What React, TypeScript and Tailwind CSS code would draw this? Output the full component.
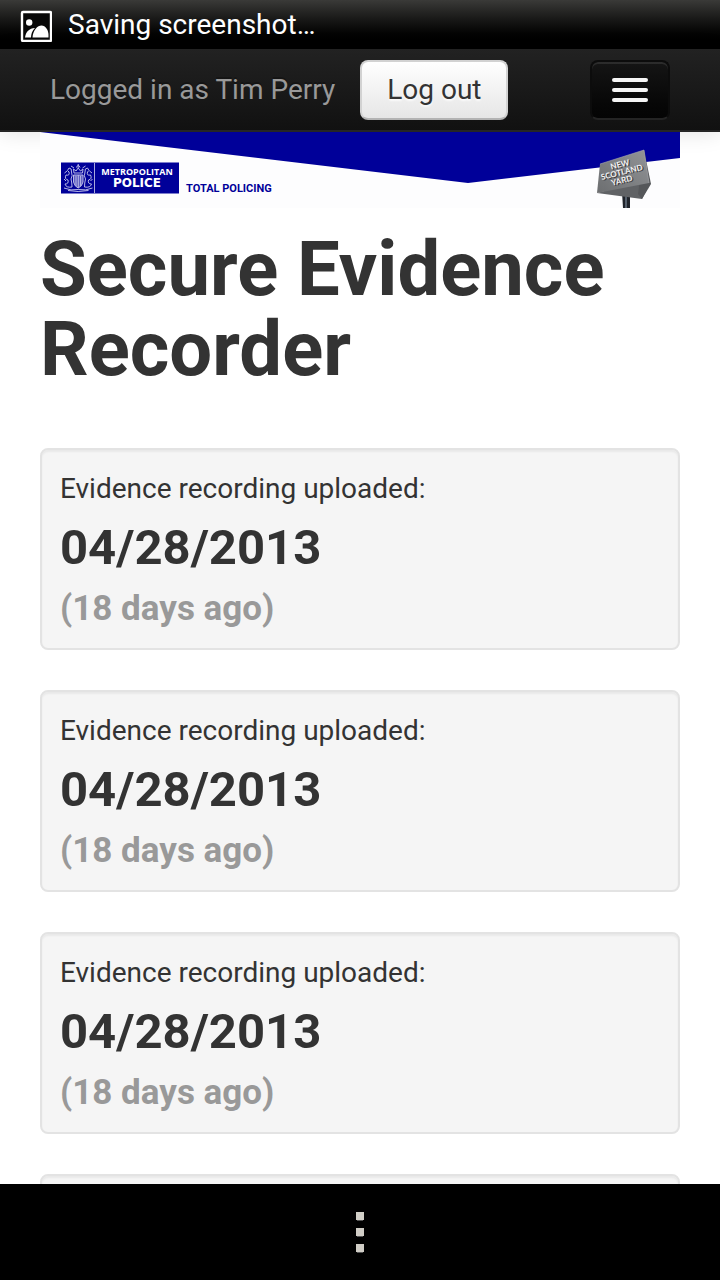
import React from "react";

type Recording = { id: number; date: string; age: string };

const recordings: Recording[] = [
  { id: 1, date: "04/28/2013", age: "(18 days ago)" },
  { id: 2, date: "04/28/2013", age: "(18 days ago)" },
  { id: 3, date: "04/28/2013", age: "(18 days ago)" },
  { id: 4, date: "04/28/2013", age: "(18 days ago)" },
];

function StatusBar() {
  return (
    <div className="flex h-[49px] shrink-0 items-center gap-4 bg-linear-to-b from-[#3a3a38] to-black px-5 text-white">
      <svg className="mt-[2px] size-8 shrink-0" viewBox="0 0 32 32" aria-hidden="true">
        <rect x="2" y="2" width="29" height="29" rx="1" fill="#080808" stroke="#fff" strokeWidth="2.4" />
        <circle cx="9.2" cy="12.5" r="3.2" fill="#fff" />
        <path d="M5 27.500C6 21.500 9 18.500 15 18C12 21 11.200 24 11 27.500Z" fill="#fff" />
        <path d="M12.500 27.500C13 20 17.500 15.500 21.500 15.500C25.500 15.500 28.500 20 28.500 25V27.500Z" fill="#fff" />
      </svg>
      <span className="text-[28px] leading-10">Saving screenshot…</span>
    </div>
  );
}

function NavBar() {
  return (
    <nav className="flex shrink-0 items-center justify-between border-b-2 border-[#252525] bg-linear-to-b from-[#222] to-[#111] px-[50px] pt-[11px] pb-[10px] shadow-[0_2px_20px_rgba(0,0,0,0.1)]">
      <div className="flex items-center gap-[25px]">
        <span className="text-[28px] leading-10 text-[#999] [text-shadow:0_-2px_0_rgba(0,0,0,0.25)]">
          Logged in as Tim Perry
        </span>
        <button
          type="button"
          className="h-[60px] rounded-lg border-2 border-[#d2d2d2] border-b-[#b3b3b3] bg-linear-to-b from-white to-[#e6e6e6] px-[25px] text-[28px] leading-10 text-[#333] [text-shadow:0_2px_2px_rgba(255,255,255,0.75)]"
        >
          Log out
        </button>
      </div>
      <button
        type="button"
        aria-label="Toggle navigation"
        className="flex h-[60px] w-20 shrink-0 flex-col items-center justify-center gap-[6px] rounded-lg border-2 border-[#0c0c0c] border-b-[#242424] bg-linear-to-b from-[#151515] to-[#040404] shadow-[inset_0_2px_0_rgba(255,255,255,0.1)]"
      >
        <span className="h-1 w-9 rounded-xs bg-[#f5f5f5]" />
        <span className="h-1 w-9 rounded-xs bg-[#f5f5f5]" />
        <span className="h-1 w-9 rounded-xs bg-[#f5f5f5]" />
      </button>
    </nav>
  );
}

function Banner() {
  return (
    <svg
      className="relative block w-full bg-[#fdfdfe]"
      viewBox="0 0 640 76"
      role="img"
      aria-label="Metropolitan Police, Total Policing"
    >
      <defs>
        <linearGradient id="signFace" x1="0" y1="1" x2="1" y2="0">
          <stop offset="0" stopColor="#6c6e70" />
          <stop offset="1" stopColor="#929497" />
        </linearGradient>
      </defs>
      <path d="M0 0H640V26L428 51Z" fill="#000099" />

      <rect x="21" y="30.5" width="118" height="31" fill="#000099" />
      <path d="M54.500 31V61" stroke="#a8a8dc" strokeWidth="1" />
      <g fill="none" stroke="#b9b9e6" strokeWidth="1">
        <path d="M33.500 43H43V50Q42 54.500 38.200 56Q34.500 54.500 33.500 50Z" fill="#5c5cc0" />
        <path d="M36 44V54M38.300 43V56M40.600 44V54" />
        <path d="M34 41L33.500 37L36 39L38.200 36L40.500 39L43 37L42.500 41Z" />
        <path d="M36.500 35.500Q38.200 31 40 35.500M38.200 32V36" />
        <path d="M32 55Q26 56 25 52Q29 52 28 48Q24 47 26 43Q30 44 29 40Q26 39 29 36Q32 36 31.500 40Q33 44 31 47Q32 51 32 55" />
        <path d="M44.500 55Q50.500 56 51.500 52Q47.500 52 48.500 48Q52.500 47 50.500 43Q46.500 44 47.500 40Q50.500 39 47.500 36Q44.500 36 45 40Q43.500 44 45.500 47Q44.500 51 44.500 55" />
        <path d="M24 56Q31 59 38.200 57.500Q46 59 52.500 56M28 58.500Q38 60.500 48.500 58.500" />
        <path d="M24.500 41L27 39M52 41L49.500 39M24 47L26 49M52.500 47L50.500 49M31 34L34 36M45.500 34L42.500 36" />
      </g>
      <text x="97" y="43" textAnchor="middle" fill="#fff" className="font-['Open_Sans'] text-[9px] font-bold">
        METROPOLITAN
      </text>
      <text x="97" y="55" textAnchor="middle" fill="#fff" className="font-['DejaVu_Sans'] text-[12px] font-bold">
        POLICE
      </text>
      <text x="146" y="60" fill="#000099" className="font-['Roboto'] text-[11px] font-bold">
        TOTAL POLICING
      </text>

      <path d="M582 60H590V76H583Z" fill="#20242b" />
      <path d="M585 62H587V76H585Z" fill="#56606c" />
      <path d="M557 61L602 67L610 51L604 48Z" fill="#606265" />
      <path d="M604 18L611 52L602 67L598 62Z" fill="#55575a" />
      <path d="M560 32L604 18L609 51L557 61Z" fill="url(#signFace)" />
      <path d="M560 32L604 18L609 51" fill="none" stroke="#aaaaae" strokeWidth="0.6" />
      <g
        transform="translate(582 41) rotate(-14)"
        textAnchor="middle"
        fill="#f2f2f2"
        className="font-['Lato'] text-[8px] font-bold [text-shadow:1px_1px_0_#3a3a3c]"
      >
        <text x="0" y="-6">NEW</text>
        <text x="0" y="2">SCOTLAND</text>
        <text x="-2" y="10">YARD</text>
      </g>
    </svg>
  );
}

function RecordingCard({ recording }: { recording: Recording }) {
  return (
    <li className="rounded-lg border-2 border-[#e3e3e3] bg-[#f5f5f5] px-[18px] pt-[19px] pb-[9px] shadow-[inset_0_2px_2px_rgba(0,0,0,0.05)]">
      <p className="text-[28px] leading-10">Evidence recording uploaded:</p>
      <h2 className="flex flex-col font-bold">
        <span className="text-[49px] leading-[78px]">{recording.date}</span>
        <small className="-mt-2 text-[35px] leading-[60px] text-[#999]">{recording.age}</small>
      </h2>
    </li>
  );
}

export default function App() {
  return (
    <div className="flex h-screen flex-col overflow-hidden bg-white font-['Roboto',sans-serif] text-[#333]">
      <StatusBar />
      <NavBar />
      <main className="min-h-0 flex-1 overflow-y-auto px-10 [scrollbar-width:none]">
        <Banner />
        <h1 className="mt-[21px] text-[76px] leading-[80px] font-bold">Secure Evidence Recorder</h1>
        <ul className="mt-[59px] flex flex-col gap-10">
          {recordings.map((recording) => (
            <RecordingCard key={recording.id} recording={recording} />
          ))}
        </ul>
      </main>
      <footer className="flex h-24 shrink-0 items-center justify-center bg-black">
        <button type="button" aria-label="More options" className="flex flex-col gap-2 p-2">
          <span className="size-2 bg-[#d0cdc6] shadow-[0_2px_0_-1px_#555]" />
          <span className="size-2 bg-[#d0cdc6] shadow-[0_2px_0_-1px_#555]" />
          <span className="size-2 bg-[#d0cdc6] shadow-[0_2px_0_-1px_#555]" />
        </button>
      </footer>
    </div>
  );
}
